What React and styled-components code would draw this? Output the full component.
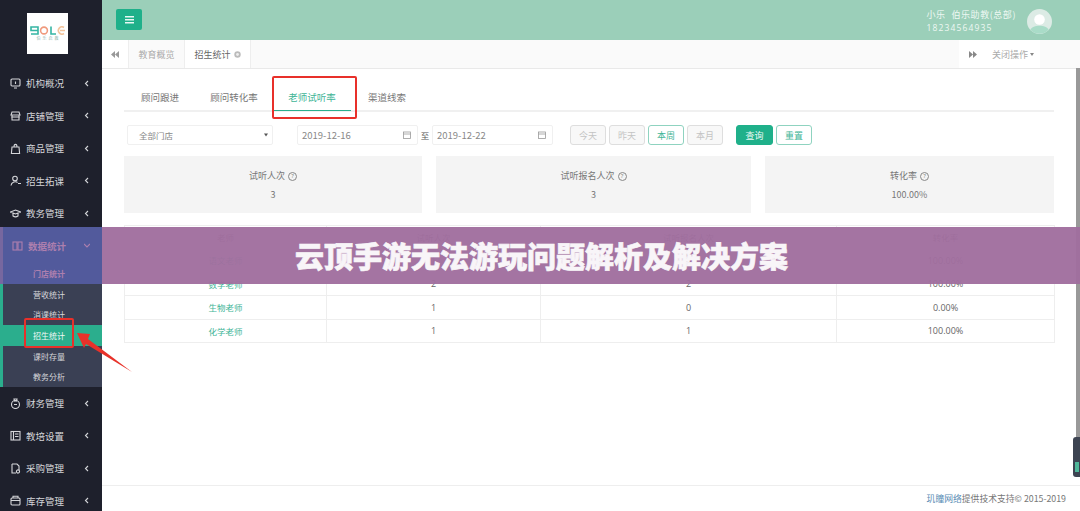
import React from "react";
import styled, { createGlobalStyle } from "styled-components";

const Global = createGlobalStyle`
  html, body { margin: 0; padding: 0; width: 1080px; height: 511px; overflow: hidden; background: #fff; }
  body { font-family: "Open Sans", "Noto Sans CJK SC", sans-serif; }
  * { box-sizing: border-box; }
`;
const Page = styled.div`position: relative; display: flex; width: 1080px; height: 511px; overflow: hidden;`;
const Sidebar = styled.aside`position: relative; z-index: 2; width: 102px; flex: none; height: 511px; background: #1e202c; display: flex; flex-direction: column; overflow: hidden;`;
const LogoWrap = styled.div`height: 67px; flex: none; display: flex; padding: 13px 0 0 27px;`;
const Logo = styled.div`width: 41px; height: 41px; background: #fff; display: flex; flex-direction: column; align-items: center; padding-top: 13px;`;
const LogoCn = styled.div`font-size: 4px; line-height: 6px; color: #8fb5ac; letter-spacing: 2px; margin-left: 2px; margin-top: 1px;`;
const MenuRow = styled.div`height: 32.5px; flex: none; display: flex; align-items: center; padding: 0 10px 0 10px; color: #d5d6da; font-size: 9.5px; font-family: "Noto Sans CJK SC", sans-serif;`;
const ActiveRow = styled(MenuRow)`height: 35px; margin-top: -2.5px; padding: 2.5px 10px 0 9px; color: #ad7fae; font-weight: 700; background: #525a9c; border-left: 3px solid #77679f;`;
const MenuIcon = styled.svg`width: 11px; height: 11px; flex: none; margin-right: 5px; fill: none; stroke: currentColor; stroke-width: 1.1;`;
const MenuLabel = styled.span`flex: 1;`;
const Chevron = styled.svg`width: 6px; height: 7px; fill: none; stroke: ${p => p.$tint || "#d5d6da"}; stroke-width: 1.1; flex: none; margin-right: 2px;`;
const SubPanel = styled.div`flex: none; display: flex; flex-direction: column; font-family: "Noto Sans CJK SC", sans-serif;`;
const DimItem = styled.div`height: 22px; display: flex; align-items: center; padding-left: 30px; background: #525a9c; border-left: 3px solid #77679f; font-size: 8px; font-weight: 700; color: #ad7fae;`;
const SubGroup = styled.div`height: 103px; background: #3a4054; border-left: 3px solid #2bae8d; display: flex; flex-direction: column;`;
const SubItem = styled.div`flex: 1; display: flex; align-items: center; margin-left: ${p => p.$on ? "-3px" : "0"}; padding-left: ${p => p.$on ? "33px" : "30px"}; font-size: 8px; color: ${p => p.$on ? "#f0f8f5" : "#d5d6da"}; background: ${p => p.$on ? "#2bae8d" : "transparent"};`;
const Main = styled.main`flex: 1; min-width: 0; display: flex; flex-direction: column; height: 511px;`;
const Topbar = styled.header`height: 40px; flex: none; background: #9bcfb9; display: flex; align-items: center; justify-content: space-between; padding: 0 28px 0 14px;`;
const MenuButton = styled.div`width: 26px; height: 21px; margin-top: -1px; border-radius: 2px; background: #1fb08a; display: flex; align-items: center; justify-content: center;`;
const User = styled.div`display: flex; align-items: center; gap: 11px; margin-top: 3px;`;
const UserText = styled.div`color: #eef8f3; font-size: 9px; line-height: 12.5px; font-family: "Noto Sans CJK SC", sans-serif; white-space: nowrap;`;
const NameRow = styled.div`display: flex; gap: 6px; letter-spacing: 0.55px;`;
const Phone = styled.div`letter-spacing: 1.15px; font-family: "Open Sans", sans-serif; font-size: 8.5px;`;
const TabBar = styled.div`height: 29px; flex: none; display: flex; align-items: stretch; background: #fafafa; border-bottom: 1px solid #e9e9e9; font-family: "Noto Sans CJK SC", sans-serif; font-size: 9px;`;
const NavArrow = styled.div`width: 27px; flex: none; display: flex; align-items: center; justify-content: center; background: #fff; color: #999; border-right: ${p => p.$end ? "0" : "1px solid #eee"};`;
const PageTab = styled.div`display: flex; align-items: center; gap: 3px; color: ${p => p.$on ? "#666" : "#aaa"}; background: ${p => p.$on ? "#fff" : "#fafafa"}; border-right: 1px solid #eee; width: ${p => p.$on ? "66px" : "56px"}; justify-content: center; white-space: nowrap;`;
const Spacer = styled.div`flex: 1;`;
const CloseAll = styled.div`width: 54px; flex: none; background: #fff; color: #aaa; display: flex; align-items: center; justify-content: center; gap: 2px; margin-right: 40px;`;
const Caret = styled.span`width: 0; height: 0; border-left: 2.5px solid transparent; border-right: 2.5px solid transparent; border-top: 3px solid #888;`;
const Content = styled.div`flex: 1; min-height: 0; padding: 10px 26px 0 22px; font-family: "Noto Sans CJK SC", sans-serif; display: flex; flex-direction: column;`;
const InnerTabs = styled.div`height: 33px; flex: none; border-bottom: 2px solid #f0f0f0; display: flex; font-size: 9.5px; padding-left: 1px;`;
const InnerTab = styled.div`width: ${p => p.$w}px; height: 32px; display: flex; align-items: flex-start; padding-top: 11px; line-height: 15px; justify-content: center; color: ${p => p.$on ? "#3fb597" : "#777"}; border-bottom: ${p => p.$on ? "1px solid #2bae8d" : "0"};`;
const Filters = styled.div`display: flex; align-items: center; height: 20px; margin-top: 13px; margin-left: 3px; font-size: 8.5px; color: #777;`;
const Field = styled.div`height: 20px; width: ${p => p.$w}px; margin-left: ${p => p.$ml || 0}px; border: 1px solid #f0f0f0; border-radius: 2px; display: flex; align-items: center; justify-content: space-between; padding: 0 ${p => p.$pr || 6}px 0 ${p => p.$pl || 4}px; font-size: ${p => p.$fs || 8.5}px; color: #888;`;
const DateIcon = styled.svg`width: 8px; height: 8px; fill: none; stroke: #999; stroke-width: 0.8;`;
const Sep = styled.span`width: 14px; text-align: center; flex: none; font-size: 8.5px; color: #555;`;
const Pill = styled.div`width: ${p => p.$w || 36}px; height: 20px; margin-left: ${p => p.$ml ?? 3}px; border-radius: 3px; display: flex; align-items: center; justify-content: center; font-size: 9px;
  background: ${p => p.$solid ? "#1fb08a" : p.$on ? "#fff" : "#f8f8f8"};
  color: ${p => p.$solid ? "#eafaf5" : p.$on ? "#3fb597" : "#c4c4c4"};
  border: 1px solid ${p => p.$solid ? "#1fb08a" : p.$on ? "#8fd3c0" : "#dedede"};`;
const Stats = styled.div`display: grid; grid-template-columns: 298px 315px 289px; column-gap: 14px; margin-top: 11px; flex: none;`;
const Stat = styled.div`height: 57px; background: #f4f4f4; display: flex; flex-direction: column; align-items: center; padding-top: 13px; font-size: 9px; color: #777; gap: 5px; line-height: 14px;`;
const StatTitle = styled.div`display: flex; align-items: center; gap: 3px;`;
const Help = styled.span`width: 9px; height: 9px; border: 1px solid #888; border-radius: 50%; font-size: 6px; line-height: 7px; text-align: center; font-family: "Open Sans", sans-serif;`;
const Table = styled.table`width: 930px; margin-top: 12px; border-collapse: collapse; table-layout: fixed; font-size: 8.5px; color: #666; flex: none;`;
const Th = styled.th`height: 23px; font-weight: 400; border: 1px solid #eee; color: #666; width: ${p => p.$w}px; padding: 0;`;
const Td = styled.td`height: 23.5px; border: 1px solid #eee; text-align: center; padding: 0; color: ${p => p.$link ? "#3fb597" : "#666"}; font-size: ${p => p.$link ? 8.5 : 9}px; font-family: ${p => p.$link ? '"Noto Sans CJK SC", sans-serif' : '"Open Sans", sans-serif'};`;
const Grow = styled.div`flex: 1;`;
const Footer = styled.footer`height: 26px; flex: none; border-top: 1px solid #eee; display: flex; align-items: center; justify-content: flex-end; padding-right: 14px; font-size: 8.8px; color: #777; background: #fff; font-family: "Noto Sans CJK SC", sans-serif;`;
const FootLink = styled.span`color: #5b8db5;`;
const Strip = styled.div`position: absolute; right: 0; top: 68px; width: 4px; height: 369px; background: #999;`;
const Banner = styled.div`position: absolute; left: 102px; top: 227px; right: 0; height: 57px; background: rgba(160, 110, 158, 0.96); display: flex; align-items: center; padding-left: 193px; padding-bottom: 2px; color: #f8f5f8; font-family: "Noto Sans CJK SC", sans-serif; font-weight: 900; font-size: 29px; -webkit-text-stroke: 0.7px #f8f5f8;`;
const Handle = styled.div`position: absolute; right: 0; top: 437px; width: 7px; height: 40px; background: #3d4452; border-radius: 3px 0 0 3px;`;
const HandleOn = styled.div`position: absolute; right: 1px; top: 462px; width: 4px; height: 10px; background: #4fb79a;`;
const ArrowSvg = styled.svg`position: absolute; z-index: 3; left: 74px; top: 328px; width: 62px; height: 48px;`;
const Frame = styled.div`position: absolute; border: 2px solid #e8302a; border-radius: 2px;`;
const TabFrame = styled(Frame)`left: 272px; top: 76px; width: 85px; height: 43px;`;
const SubFrame = styled(Frame)`z-index: 3; left: 24px; top: 318px; width: 50px; height: 30px;`;
const LogoMark = styled.svg`width: 36px; height: 9px; flex: none;`;

const ic = {
  a: <><rect x="1" y="1" width="9" height="7" rx="1"/><path d="M4 10h3M5.5 3.5v2.5"/></>,
  b: <><path d="M2 2h7l1 3H1zM2 5v5h7V5"/><path d="M1.5 7h8"/></>,
  c: <><path d="M2 4h7l.6 6.5H1.4zM4 4c0-3.5 3-3.5 3 0"/></>,
  d: <><circle cx="5" cy="3.5" r="2.3"/><path d="M1 10.5c.3-3.5 5-4.6 6.5-3M8 8.5h3"/></>,
  e: <><path d="M.5 4 5.5 2l5 2-5 2zM3 5v3c1.5 1 3.5 1 5 0V5"/></>,
  f: <><rect x="1" y="2" width="4" height="8"/><rect x="6" y="2" width="4" height="8"/></>,
  g: <><circle cx="5.5" cy="6.5" r="4"/><path d="M4 1h3L6.5 3h-2zM4 6.5h3"/></>,
  h: <><rect x="1" y="1.5" width="9" height="8.5"/><path d="M3.5 1.5v8.5M5 4h3.5M5 6.5h3.5"/></>,
  i: <><path d="M2 1h5l2 2v4M2 1v9h4"/><circle cx="8" cy="8.5" r="1.6"/></>,
  j: <><rect x="1" y="3" width="9" height="7" rx="1"/><path d="M3 3V1.2h5V3M1 5.5h9"/></>,
};
const Row = ({ i, label }) => (
  <MenuRow>
    <MenuIcon viewBox="0 0 11 11">{ic[i]}</MenuIcon>
    <MenuLabel>{label}</MenuLabel>
    <Chevron viewBox="0 0 6 7"><path d="M4 1L1.5 3.5 4 6"/></Chevron>
  </MenuRow>
);
const Cal = () => <DateIcon viewBox="0 0 8 8"><rect x="0.5" y="1" width="7" height="6.5"/><path d="M0.5 3h7"/></DateIcon>;

export default function App() {
  return (
    <Page>
      <Global />
      <Sidebar>
        <LogoWrap>
          <Logo>
            <LogoMark viewBox="0 0 36 9" fill="none" strokeWidth="1.6">
              <path d="M8 4.5H1V1h7v7H1" stroke="#35b5a3"/>
              <circle cx="14" cy="4.5" r="3.4" stroke="#f09a7d"/>
              <path d="M21 .5v7.5h5" stroke="#35b5a3"/>
              <path d="M34 1.5a3.6 3.6 0 1 0 0 6M30 4.5h5" stroke="#f3c49c"/>
            </LogoMark>
            <LogoCn>伯乐启教</LogoCn>
          </Logo>
        </LogoWrap>
        <Row i="a" label="机构概况" />
        <Row i="b" label="店铺管理" />
        <Row i="c" label="商品管理" />
        <Row i="d" label="招生拓课" />
        <Row i="e" label="教务管理" />
        <ActiveRow>
          <MenuIcon viewBox="0 0 11 11">{ic.f}</MenuIcon>
          <MenuLabel>数据统计</MenuLabel>
          <Chevron viewBox="0 0 6 7" $tint="#ad7fae"><path d="M0 2l3 3 3-3"/></Chevron>
        </ActiveRow>
        <SubPanel>
          <DimItem>门店统计</DimItem>
          <SubGroup>
            <SubItem>营收统计</SubItem>
            <SubItem>消课统计</SubItem>
            <SubItem $on>招生统计</SubItem>
            <SubItem>课时存量</SubItem>
            <SubItem>教务分析</SubItem>
          </SubGroup>
        </SubPanel>
        <Row i="g" label="财务管理" />
        <Row i="h" label="教培设置" />
        <Row i="i" label="采购管理" />
        <Row i="j" label="库存管理" />
      </Sidebar>
      <Main>
        <Topbar>
          <MenuButton>
            <svg width="9" height="8" viewBox="0 0 9 8" fill="#e8f8f3"><rect width="9" height="1.5"/><rect y="3" width="9" height="1.5"/><rect y="6" width="9" height="1.5"/></svg>
          </MenuButton>
          <User>
            <UserText>
              <NameRow><span>小乐</span><span>伯乐助教(总部)</span></NameRow>
              <Phone>18234564935</Phone>
            </UserText>
            <svg width="25" height="25" viewBox="0 0 26 26">
              <circle cx="13" cy="13" r="13" fill="#dcebe5"/>
              <circle cx="13" cy="11" r="5.5" fill="#fff"/>
              <path d="M3.5 21.5C6 16 20 16 22.5 21.5A13 13 0 0 1 3.5 21.5z" fill="#a9dcc8"/>
            </svg>
          </User>
        </Topbar>
        <TabBar>
          <NavArrow>
            <svg width="8" height="7" viewBox="0 0 8 7" fill="#999"><path d="M4 0v7L0 3.5zM8 0v7L4 3.5z"/></svg>
          </NavArrow>
          <PageTab>教育概览</PageTab>
          <PageTab $on>招生统计 <svg width="7" height="7" viewBox="0 0 7 7"><circle cx="3.5" cy="3.5" r="3.2" fill="#bbb"/><circle cx="3.5" cy="3.5" r="1.4" fill="#eee"/></svg></PageTab>
          <Spacer />
          <NavArrow $end>
            <svg width="8" height="7" viewBox="0 0 8 7" fill="#888"><path d="M0 0v7l4-3.5zM4 0v7l4-3.5z"/></svg>
          </NavArrow>
          <CloseAll>关闭操作 <Caret /></CloseAll>
        </TabBar>
        <Content>
          <InnerTabs>
            <InnerTab $w={70}>顾问跟进</InnerTab>
            <InnerTab $w={78}>顾问转化率</InnerTab>
            <InnerTab $w={78} $on>老师试听率</InnerTab>
            <InnerTab $w={72}>渠道线索</InnerTab>
          </InnerTabs>
          <Filters>
            <Field $w={146} $pl={11} $pr={4}>全部门店<svg width="4" height="4" viewBox="0 0 4 4" fill="#555"><path d="M0 .5h4L2 3.5z"/></svg></Field>
            <Field $w={121} $ml={24} $fs={9.5}>2019-12-16<Cal /></Field>
            <Sep>至</Sep>
            <Field $w={121} $fs={9.5}>2019-12-22<Cal /></Field>
            <Pill $ml={17}>今天</Pill>
            <Pill>昨天</Pill>
            <Pill $on>本周</Pill>
            <Pill>本月</Pill>
            <Pill $solid $ml={13} $w={37}>查询</Pill>
            <Pill $on>重置</Pill>
          </Filters>
          <Stats>
            <Stat><StatTitle>试听人次 <Help>?</Help></StatTitle><div>3</div></Stat>
            <Stat><StatTitle>试听报名人次 <Help>?</Help></StatTitle><div>3</div></Stat>
            <Stat><StatTitle>转化率 <Help>?</Help></StatTitle><div>100.00%</div></Stat>
          </Stats>
          <Table>
            <thead>
              <tr><Th $w={202}>老师</Th><Th $w={214}>试听人次</Th><Th $w={296}>试听报名人次</Th><Th $w={218}>转化率</Th></tr>
            </thead>
            <tbody>
              <tr><Td $link>语文老师</Td><Td>1</Td><Td>1</Td><Td>100.00%</Td></tr>
              <tr><Td $link>数学老师</Td><Td>2</Td><Td>2</Td><Td>100.00%</Td></tr>
              <tr><Td $link>生物老师</Td><Td>1</Td><Td>0</Td><Td>0.00%</Td></tr>
              <tr><Td $link>化学老师</Td><Td>1</Td><Td>1</Td><Td>100.00%</Td></tr>
            </tbody>
          </Table>
          <Grow />
        </Content>
        <Footer><FootLink>玑瞳网络</FootLink>提供技术支持© 2015-2019</Footer>
      </Main>
      <TabFrame />
      <SubFrame />
      <Strip />
      <Banner>云顶手游无法游玩问题解析及解决方案</Banner>
      <ArrowSvg viewBox="0 0 62 48"><path d="M3 5 L16 6 L14 11 L58 44 L12 16 L10 20 Z" fill="#e8322a"/></ArrowSvg>
      <Handle /><HandleOn />
    </Page>
  );
}
